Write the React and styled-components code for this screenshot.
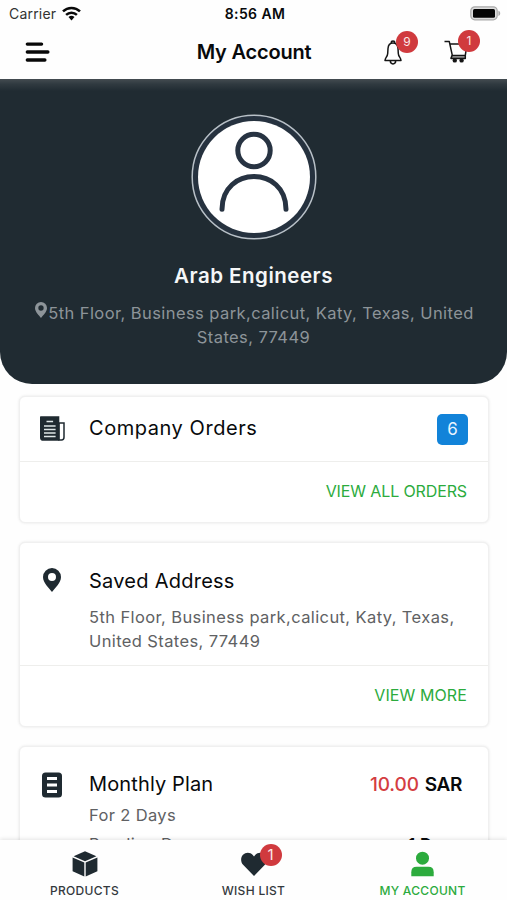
import React from "react";
import styled, { createGlobalStyle } from "styled-components";

const GlobalStyle = createGlobalStyle`
  * { box-sizing: border-box; }
  body { margin: 0; background: #fff; font-family: Inter, "Liberation Sans", sans-serif; color: #080a0c; }
  svg { display: block; flex: none; }
`;

const Screen = styled.div`
  position: relative;
  width: 507px;
  height: 900px;
  overflow: hidden;
  display: flex;
  flex-direction: column;
  background: #fefefe;
`;

const Label = styled.span`
  display: block;
  white-space: nowrap;
  font-size: ${(p) => p.$size}px;
  line-height: ${(p) => p.$line || 23.5}px;
  font-weight: ${(p) => p.$weight || 400};
  letter-spacing: ${(p) => p.$track || 0}px;
  color: ${(p) => p.$color || "#080a0c"};
`;

const StatusBar = styled.div`
  height: 27px;
  flex: none;
  display: grid;
  grid-template-columns: 1fr auto 1fr;
  align-items: center;
  padding: 0 6px 0 9px;
`;
const Carrier = styled.div`
  display: flex;
  align-items: center;
  gap: 6px;
`;
const BatteryWrap = styled.div`
  display: flex;
  justify-content: flex-end;
`;

const Header = styled.header`
  height: 52px;
  flex: none;
  display: grid;
  grid-template-columns: 1fr auto 1fr;
  align-items: center;
  padding: 0 24px 2px 25px;
`;
const Title = styled.div`
  padding-top: 1px;
`;
const Actions = styled.div`
  display: flex;
  justify-content: flex-end;
  gap: 42px;
  padding-right: 15px;
`;
const IconWithBadge = styled.div`
  position: relative;
  width: ${(p) => p.$width}px;
`;
const Badge = styled.span`
  position: absolute;
  top: ${(p) => p.$top}px;
  left: ${(p) => p.$left}px;
  width: 22px;
  height: 22px;
  border-radius: 50%;
  background: #d03a3e;
  color: #fbe9e9;
  font-size: ${(p) => p.$size || 12}px;
  line-height: 22px;
  text-align: center;
`;

const Profile = styled.section`
  height: 305px;
  flex: none;
  display: flex;
  flex-direction: column;
  align-items: center;
  padding-top: 35px;
  border-radius: 0 0 32px 32px;
  background: linear-gradient(#444c51 0, #303a40 5px, #202b32 12px);
`;
const ProfileName = styled.div`
  margin-top: 22px;
`;
const ProfileAddress = styled.div`
  margin-top: 12px;
  display: flex;
  flex-direction: column;
  align-items: center;
`;
const AddressLine = styled.div`
  display: flex;
  gap: 1px;
  padding-left: 2px;
`;

const Content = styled.main`
  padding: 12px 18px 0 19px;
  display: flex;
  flex-direction: column;
  gap: 19px;
`;
const Card = styled.article`
  flex: none;
  height: ${(p) => p.$height}px;
  border-radius: 6px;
  background: #fff;
  border: 1px solid #f0f0f0;
  box-shadow: 0 0 3px rgba(0, 0, 0, 0.1);
`;
const CardBody = styled.div`
  height: ${(p) => p.$height}px;
  display: grid;
  grid-template-columns: 49px 1fr auto;
  align-content: start;
  padding: ${(p) => p.$top}px 20px 0 20px;
  border-bottom: 1px solid ${(p) => (p.$open ? "transparent" : "#eeeeec")};
`;
const CardFooter = styled.div`
  height: 60px;
  display: flex;
  align-items: center;
  justify-content: flex-end;
  padding-right: 21px;
`;
const Details = styled.div`
  grid-column: 2 / -1;
  display: ${(p) => (p.$split ? "flex" : "block")};
  justify-content: space-between;
  margin-top: ${(p) => p.$gap}px;
  padding-right: ${(p) => (p.$split ? 7 : 0)}px;
`;
const Count = styled.span`
  width: 31px;
  height: 31px;
  margin-top: -2px;
  border-radius: 5px;
  background: #1283d9;
  color: #e8f4ff;
  font-size: 17px;
  line-height: 31px;
  text-align: center;
`;
const Price = styled.div`
  display: flex;
  gap: 6px;
  padding-right: 6px;
`;

const TabBar = styled.nav`
  position: absolute;
  left: 0;
  right: 0;
  bottom: 0;
  height: 60px;
  display: grid;
  grid-template-columns: repeat(3, 1fr);
  background: #fefefe;
  box-shadow: 0 -1px 4px rgba(0, 0, 0, 0.11);
`;
const Tab = styled.div`
  display: flex;
  flex-direction: column;
  align-items: center;
  padding-top: 11px;
  gap: 7px;
`;

const Wifi = () => (
  <svg width="19" height="15" viewBox="0 0 19 15">
    <g fill="none" stroke="#090909" strokeWidth="2.5">
      <path d="M1 5.4a12.2 12.2 0 0 1 17 0" />
      <path d="M4.1 8.8a7.8 7.8 0 0 1 10.8 0" />
    </g>
    <path d="M6.5 11a4.5 4.5 0 0 1 6 0l-3 3.4z" fill="#090909" />
  </svg>
);
const Battery = () => (
  <svg width="31" height="15" viewBox="0 0 31 15">
    <rect x=".8" y=".8" width="26.4" height="13" rx="4" fill="#ddd" stroke="#aaa" strokeWidth="1.2" />
    <rect x="3" y="3" width="22" height="8.8" rx="1.5" fill="#050505" />
    <path d="M28.4 4.7c2.4.6 2.4 4.6 0 5.2z" fill="#aaa" />
  </svg>
);
const MenuIcon = () => (
  <svg width="25" height="22" viewBox="0 0 25 22" stroke="#080808" strokeWidth="3.3" strokeLinecap="round">
    <path d="M2.3 3.1h14.3M2.3 11h20.6M2.3 19h17.6" />
  </svg>
);
const Bell = () => (
  <svg width="18" height="25" viewBox="0 0 18 25" fill="none" stroke="#151515" strokeWidth="1.5" strokeLinejoin="round">
    <path d="M7.2 3V2.2Q7.2 1 9 1t1.8 1.2V3M9 3C5.6 3 4.2 5.2 4 8.5l-.3 5C3.5 17 1.2 17.3 1 20.6h16c-.2-3.3-2.5-3.6-2.7-7.1L14 8.5C13.8 5.2 12.4 3 9 3zM6.3 20.8c0 4.1 5.4 4.1 5.4 0" />
  </svg>
);
const Cart = () => (
  <svg width="24" height="23" viewBox="0 0 24 23" fill="none" stroke="#151515" strokeWidth="1.5" strokeLinejoin="round">
    <path d="M.5 1.6h4.8l3 13.8h13L23 4H5.8" />
    <path d="M7.4 17h14" stroke="#8b8b8b" strokeWidth="2" />
    <path d="M8.2 15.2 6.9 18.4h14.4v-3" />
    <circle cx="10.8" cy="20.4" r="2.2" fill="#151515" stroke="none" />
    <circle cx="17.6" cy="20.4" r="2.2" fill="#151515" stroke="none" />
  </svg>
);
const Avatar = () => (
  <svg width="126" height="126" viewBox="0 0 126 126">
    <circle cx="63" cy="63" r="61.8" fill="#26323f" stroke="#b9c1c8" strokeWidth="1.5" />
    <circle cx="63" cy="63" r="56" fill="#fff" />
    <g fill="none" stroke="#273342" strokeWidth="5" strokeLinecap="round">
      <circle cx="63" cy="36.5" r="16.2" />
      <path d="M31 95.2c0-43.5 64-43.5 64 0" />
    </g>
  </svg>
);
const Pin = ({ width, height, color }) => (
  <svg width={width} height={height} viewBox="0 0 18 24">
    <path d="M9 0a9 9 0 0 0-9 9c0 6 6 11 9 15 3-4 9-9 9-15a9 9 0 0 0-9-9zm0 5a4 4 0 1 1 0 8 4 4 0 0 1 0-8z" fill={color} fillRule="evenodd" />
  </svg>
);
const News = () => (
  <svg width="25" height="25" viewBox="0 0 25 25">
    <path d="M19 6.9h5V21.3q0 2.7-2.5 2.7H19z" fill="#fff" stroke="#1f2a31" strokeWidth="1.5" />
    <path d="M0 .8Q0 .2.7.2h18.6v24.6H3.4Q0 24.8 0 21.4z" fill="#1f2a31" />
    <path d="M6.5 5.5h6.6M4 10h11.6M4 13.5h11.6M4 17h11.6M4 20.5h11.6" stroke="#dfe7e8" strokeWidth="1.6" />
  </svg>
);
const Plan = () => (
  <svg width="20" height="26" viewBox="0 0 20 26">
    <rect y=".5" width="20" height="25" rx="3.5" fill="#1f2a31" />
    <path d="M5 6.5h10M5 13h10M5 19.5h10" stroke="#fff" strokeWidth="3.2" />
  </svg>
);
const Cube = () => (
  <svg width="26" height="26" viewBox="0 0 26 26" fill="#1f2a31">
    <path d="M13 .3 24.4 5.2 13 10.2 1.6 5.2z" />
    <path d="M.6 6.4 12.3 11.5v13.9L.6 20.3zM25.4 6.4 13.7 11.5v13.9l11.7-5.1z" />
  </svg>
);
const Heart = () => (
  <svg width="26" height="26" viewBox="0 0 26 26">
    <path d="M13 25 2.1 13.7C-.5 10.9-.5 6.5 2 3.8c2.7-3 7.3-2.8 9.8.1L13 5.4l1.2-1.5c2.5-2.9 7.1-3.1 9.8-.1 2.5 2.7 2.5 7.1-.1 9.9z" fill="#1f2a31" />
  </svg>
);
const Person = () => (
  <svg width="23" height="26" viewBox="0 0 23 26" fill="#2cab3d">
    <circle cx="11.5" cy="7.2" r="6.5" />
    <path d="M.3 25.3v-4.1q0-5.4 5.4-5.4h11.6q5.4 0 5.4 5.4v4.1z" />
  </svg>
);

const CardIcon = styled.div`
  width: 24px;
  height: 25px;
  display: flex;
  justify-content: center;
  align-items: center;
`;

const ink = "#1f2a31";
const grey = "#606163";
const pale = "#8d9499";
const green = "#2cab3d";

export default function App() {
  return (
    <Screen>
      <GlobalStyle />
      <StatusBar>
        <Carrier>
          <Label $size={14} $track={0.2} $color="#333">Carrier</Label>
          <Wifi />
        </Carrier>
        <Label $size={14} $weight={600} $track={0.4}>8:56 AM</Label>
        <BatteryWrap><Battery /></BatteryWrap>
      </StatusBar>
      <Header>
        <MenuIcon />
        <Title><Label $size={20} $weight={600} $track={-0.2}>My Account</Label></Title>
        <Actions>
          <IconWithBadge $width={18}><Bell /><Badge $top={-9} $left={12}>9</Badge></IconWithBadge>
          <IconWithBadge $width={24}><Cart /><Badge $top={-10} $left={14}>1</Badge></IconWithBadge>
        </Actions>
      </Header>
      <Profile>
        <Avatar />
        <ProfileName>
          <Label $size={20.5} $line={28} $weight={600} $color="#f5f7f8" $track={0.5}>Arab Engineers</Label>
        </ProfileName>
        <ProfileAddress>
          <AddressLine>
            <Pin width={12} height={16} color={pale} />
            <Label $size={16.5} $track={0.42} $color={pale}>5th Floor, Business park,calicut, Katy, Texas, United</Label>
          </AddressLine>
          <Label $size={16.5} $track={0.42} $color={pale}>States, 77449</Label>
        </ProfileAddress>
      </Profile>
      <Content>
        <Card $height={127}>
          <CardBody $height={65} $top={19}>
            <CardIcon><News /></CardIcon>
            <Label $size={20} $line={25} $track={0.55}>Company Orders</Label>
            <Count>6</Count>
          </CardBody>
          <CardFooter><Label $size={16} $track={-0.12} $color={green}>VIEW ALL ORDERS</Label></CardFooter>
        </Card>
        <Card $height={185}>
          <CardBody $height={123} $top={24}>
            <CardIcon><Pin width={18} height={24} color={ink} /></CardIcon>
            <Label $size={20} $line={29} $track={0.25}>Saved Address</Label>
            <Details $gap={10}>
              <Label $size={16.5} $track={0.39} $color={grey}>5th Floor, Business park,calicut, Katy, Texas,</Label>
              <Label $size={16.5} $track={0.39} $color={grey}>United States, 77449</Label>
            </Details>
          </CardBody>
          <CardFooter><Label $size={16} $track={0.1} $color={green}>VIEW MORE</Label></CardFooter>
        </Card>
        <Card $height={185}>
          <CardBody $height={124} $top={25} $open>
            <CardIcon><Plan /></CardIcon>
            <Label $size={20} $line={25} $track={0.13}>Monthly Plan</Label>
            <Price>
              <Label $size={19} $line={26} $weight={500} $track={-0.1} $color="#d43d42">10.00</Label>
              <Label $size={19} $line={26} $weight={600} $track={-0.4}>SAR</Label>
            </Price>
            <Details $gap={6}><Label $size={16.5} $track={0.35} $color={grey}>For 2 Days</Label></Details>
            <Details $gap={5} $split>
              <Label $size={16.5} $track={0.45} $color={grey}>Pending Days</Label>
              <Label $size={16.5} $weight={600} $track={0.3}>1 Days</Label>
            </Details>
          </CardBody>
        </Card>
      </Content>
      <TabBar>
        <Tab><Cube /><Label $size={12} $line={14} $weight={500} $track={0.3} $color="#34393d">PRODUCTS</Label></Tab>
        <Tab>
          <IconWithBadge $width={26}><Heart /><Badge $top={-7} $left={19} $size={15}>1</Badge></IconWithBadge>
          <Label $size={12} $line={14} $weight={500} $track={0.3} $color="#34393d">WISH LIST</Label>
        </Tab>
        <Tab><Person /><Label $size={12} $line={14} $weight={500} $track={0.3} $color={green}>MY ACCOUNT</Label></Tab>
      </TabBar>
    </Screen>
  );
}
